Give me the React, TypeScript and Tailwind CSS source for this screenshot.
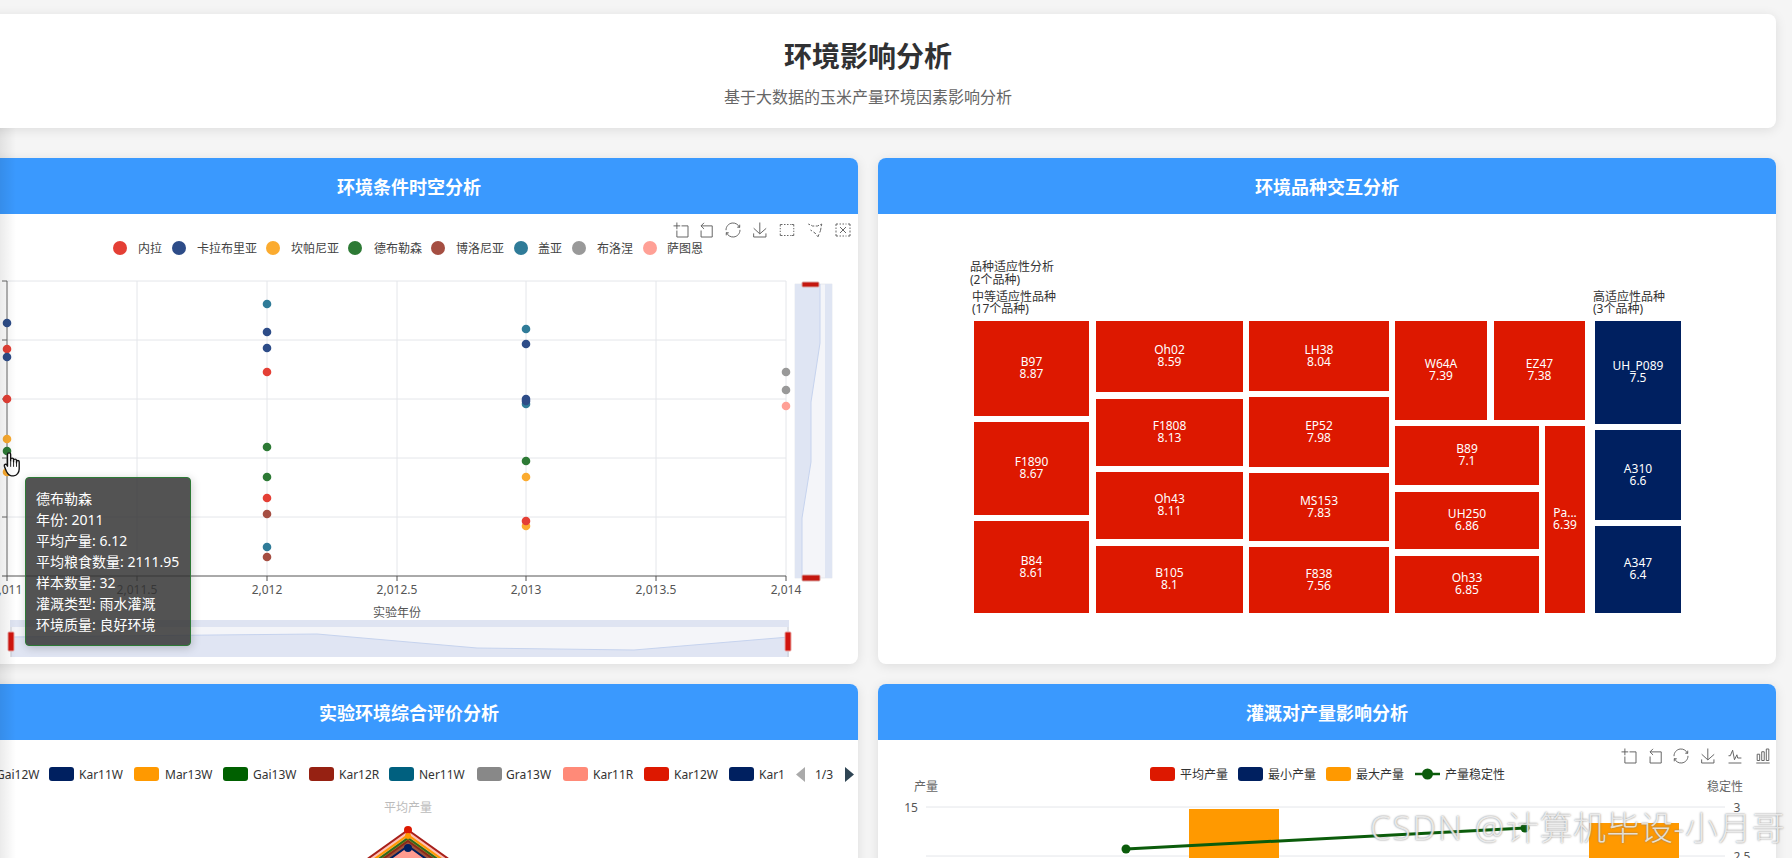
import React from "react";

const FONT = "font-['Noto_Sans','Noto_Sans_CJK_SC',sans-serif]";
const RED = "#dd1800";
const NAVY = "#002060";
const ORANGE = "#ff9900";
const GREEN = "#0b5c0b";

const C = { red: "#e43f35", navy: "#2d4c88", orange: "#fbab2f", green: "#2d7a35", brown: "#a54e42", teal: "#2f7b98", gray: "#999999", pink: "#ffa096" };

const ICONS: Record<string, React.ReactNode> = {
  zoom: <path d="M0,13.5h26.9 M13.5,26.9V0 M32.1,13.5H58V58H13.5V32.1" />,
  back: <path d="M22,1.4L9.9,13.5l12.3,12.3 M10.3,13.5H54.9v44.6H10.3v-26" />,
  restore: <path d="M47,18.9h9.8V8.7 M56.3,20.1C52.1,9,40.5,0.6,26.8,2.1C12.6,3.7,1.6,16.2,2.1,30.6 M13,41.1H3.1v10.2 M3.7,39.9c4.2,11.1,15.8,19.5,29.5,18c14.2-1.6,25.2-14.1,24.7-28.5" />,
  save: <path d="M4.7,22.9L29.3,45.5L54.7,23.4M4.6,43.6L4.6,58L53.8,58L53.8,43.6M29.2,45.1L29.2,0" />,
  rect: <path d="M3,16V8H12M48,8H57V16M57,44V52H48M12,52H3V44M18,8H24M30,8H36M42,8H45M18,52H24M30,52H36M42,52H45M3,22V27M3,33V38M57,22V27M57,33V38" />,
  poly: <path d="M3,6L10,9M15,11L20,14H27M33,14H40L46,11M51,9L57,6L55,15M54,21L52,32L49,40M46,47L42,57L37,51M33,46L30,42L24,38M18,34L12,30" />,
  clear: (
    <>
      <path d="M2,14V6H10M50,6H58V14M58,46V54H50M10,54H2V46M16,6H22M28,6H34M40,6H44M16,54H22M28,54H34M40,54H44M2,20V26M2,32V40M58,20V26M58,32V40" />
      <path d="M18,18L42,42M42,18L18,42" />
    </>
  ),
  line: <path d="M4.1,28.9h7.1l9.3-22l7.4,38l9.7-19.7l3,12.8h14.9M4.1,58h51.4" />,
  bar: <path d="M6.7,22.9h10V48h-10V22.9zM24.9,13h10v35h-10V13zM43.2,2h10v46h-10V2zM3.1,58h53.7" />,
};

function Tool({ name, x, y }: { name: string; x: number; y: number }) {
  return (
    <svg x={x} y={y} width={16} height={16} viewBox="-2 -2 64 64" fill="none" stroke="#5f5f5f" strokeWidth={3.8}>
      {ICONS[name]}
    </svg>
  );
}

function Label({ x, y, children, anchor = "start", fill = "#444", size = 12 }: { x: number; y: number; children: React.ReactNode; anchor?: "start" | "middle" | "end"; fill?: string; size?: number }) {
  return (
    <text x={x} y={y} textAnchor={anchor} dominantBaseline="central" fill={fill} fontSize={size}>
      {children}
    </text>
  );
}

function Panel({ title, viewBox, children }: { title: string; viewBox: string; children: React.ReactNode }) {
  return (
    <section className="flex h-[506px] flex-col overflow-hidden rounded-lg bg-white shadow-[0_2px_12px_rgba(0,0,0,0.1)]">
      <h2 className="flex h-[56px] shrink-0 items-center justify-center bg-[#3a99fe] pt-[2px] text-[18px] font-bold text-white">{title}</h2>
      <div className="relative h-[450px] shrink-0">
        <svg viewBox={viewBox} width={898} height={450} className="block">
          {CHARTS[title]}
        </svg>
        {children}
      </div>
    </section>
  );
}

const scatter: [number, number, string][] = [
  [7, 323, C.navy], [7, 349, C.red], [7, 357, C.navy], [7, 399, C.red], [7, 439, C.orange], [7, 472, C.orange], [7, 451, C.green],
  [267, 304, C.teal], [267, 332, C.navy], [267, 348, C.navy], [267, 372, C.red], [267, 447, C.green], [267, 477, C.green], [267, 498, C.red], [267, 514, C.brown], [267, 547, C.teal], [267, 557, C.brown],
  [526, 329, C.teal], [526, 344, C.navy], [526, 404, C.teal], [526, 401, C.navy], [526, 399, C.navy], [526, 461, C.green], [526, 477, C.orange], [526, 526, C.orange], [526, 521, C.red],
  [786, 372, C.gray], [786, 390, C.gray], [786, 406, C.pink],
];

const legend1: [number, number, string, string][] = [
  [120, 138, C.red, "内拉"], [179, 197, C.navy, "卡拉布里亚"], [273, 291, C.orange, "坎帕尼亚"], [355, 374, C.green, "德布勒森"], [438, 456, C.brown, "博洛尼亚"], [521, 538, C.teal, "盖亚"], [579, 597, C.gray, "布洛涅"], [650, 667, C.pink, "萨图恩"],
];

function Scatter() {
  return (
    <>
      {["zoom", "back", "restore", "save", "rect", "poly", "clear"].map((n, i) => (
        <Tool key={n} name={n} x={[673, 698, 725, 752, 779, 807, 835][i]} y={222} />
      ))}
      {legend1.map(([cx, tx, col, t]) => (
        <g key={t}>
          <circle cx={cx} cy={248} r={7} fill={col} />
          <Label x={tx} y={248}>{t}</Label>
        </g>
      ))}
      {[281, 340, 399, 458, 517].map((y) => (
        <line key={y} x1={7} x2={786} y1={y} y2={y} stroke="#e4e6ea" />
      ))}
      {[137, 267, 397, 526, 656, 786].map((x) => (
        <line key={x} x1={x} x2={x} y1={281} y2={576} stroke="#e4e6ea" />
      ))}
      <path d="M7,281V576" stroke="#666" />
      <path d="M2,281H7M2,340H7M2,399H7M2,458H7M2,517H7" stroke="#666" />
      <path d="M2,576H786M7,576v5M137,576v5M267,576v5M397,576v5M526,576v5M656,576v5M786,576v5" stroke="#555" fill="none" />
      {scatter.map(([x, y, col], i) => (
        <circle key={i} cx={x} cy={y} r={4.3} fill={col} />
      ))}
      {[[7, "2,011"], [137, "2,011.5"], [267, "2,012"], [397, "2,012.5"], [526, "2,013"], [656, "2,013.5"], [786, "2,014"]].map(([x, t]) => (
        <Label key={t as string} x={x as number} y={589} anchor="middle" fill="#555">{t}</Label>
      ))}
      <Label x={397} y={612} anchor="middle" fill="#555">实验年份</Label>

      <rect x={795} y={284} width={37} height={294} fill="#f4f5f9" stroke="#d8dbe3" strokeWidth={0.5} />
      <path d="M795,284H820V343L811,402V462L802,518V578H795Z" fill="#dfe5f3" stroke="none" />
      <path d="M820,284V343L811,402V462L802,518V578" fill="none" stroke="#c6d3ee" />
      <rect x={825} y={284} width={7} height={294} fill="#dfe5f3" />
      <rect x={802} y={282} width={17} height={5} rx={1} fill="#c4170f" stroke="#d9a7a5" />
      <rect x={802} y={575} width={18} height={6} rx={1} fill="#c4170f" stroke="#d9a7a5" />

      <rect x={10} y={620} width={779} height={37} fill="#f4f5f9" />
      <rect x={10} y={620} width={779} height={7} fill="#dfe4f2" />
      <path d="M11,637L317,634L477,648L634,650L789,637V657H11Z" fill="#e0e5f3" />
      <path d="M11,637L317,634L477,648L634,650L789,637" fill="none" stroke="#c6d3ee" />
      <path d="M11,627V657M788,627V657" stroke="#c9ccd4" />
      <rect x={8} y={632} width={6} height={19} rx={1} fill="#d1150f" stroke="#e8a5a2" />
      <rect x={785} y={632} width={6} height={19} rx={1} fill="#d1150f" stroke="#e8a5a2" />
    </>
  );
}

const tree: [number, number, number, number, string, string, string][] = [
  [974, 321, 1089, 416, "B97", "8.87", RED], [974, 422, 1089, 515, "F1890", "8.67", RED], [974, 521, 1089, 613, "B84", "8.61", RED],
  [1096, 321, 1243, 392, "Oh02", "8.59", RED], [1096, 399, 1243, 466, "F1808", "8.13", RED], [1096, 472, 1243, 539, "Oh43", "8.11", RED], [1096, 546, 1243, 613, "B105", "8.1", RED],
  [1249, 321, 1389, 391, "LH38", "8.04", RED], [1249, 397, 1389, 467, "EP52", "7.98", RED], [1249, 473, 1389, 541, "MS153", "7.83", RED], [1249, 547, 1389, 613, "F838", "7.56", RED],
  [1395, 321, 1487, 420, "W64A", "7.39", RED], [1494, 321, 1585, 420, "EZ47", "7.38", RED],
  [1395, 426, 1539, 485, "B89", "7.1", RED], [1395, 492, 1539, 549, "UH250", "6.86", RED], [1395, 556, 1539, 613, "Oh33", "6.85", RED], [1545, 426, 1585, 613, "Pa...", "6.39", RED],
  [1595, 321, 1681, 424, "UH_P089", "7.5", NAVY], [1595, 430, 1681, 520, "A310", "6.6", NAVY], [1595, 526, 1681, 613, "A347", "6.4", NAVY],
];

function Treemap() {
  return (
    <>
      <Label x={970} y={266} fill="#333">品种适应性分析</Label>
      <Label x={970} y={279} fill="#333">(2个品种)</Label>
      <Label x={972} y={296} fill="#333">中等适应性品种</Label>
      <Label x={972} y={308} fill="#333">(17个品种)</Label>
      <Label x={1593} y={296} fill="#333">高适应性品种</Label>
      <Label x={1593} y={308} fill="#333">(3个品种)</Label>
      {tree.map(([x1, y1, x2, y2, a, b, col]) => (
        <g key={a}>
          <rect x={x1} y={y1} width={x2 - x1} height={y2 - y1} fill={col} />
          <Label x={(x1 + x2) / 2} y={(y1 + y2) / 2 - 7} anchor="middle" fill="#fff">{a}</Label>
          <Label x={(x1 + x2) / 2} y={(y1 + y2) / 2 + 5} anchor="middle" fill="#fff">{b}</Label>
        </g>
      ))}
    </>
  );
}

const legend3: [number, number, string, string][] = [
  [-35, -4, "#c23531", "Gai12W"], [49, 79, NAVY, "Kar11W"], [134, 165, ORANGE, "Mar13W"], [223, 253, "#006000", "Gai13W"], [309, 339, "#962112", "Kar12R"], [389, 419, "#00607f", "Ner11W"], [477, 506, "#888888", "Gra13W"], [563, 593, "#ff8a78", "Kar11R"], [644, 674, RED, "Kar12W"], [729, 759, NAVY, "Kar1"],
];

function roof(a: number, w = 1.4) {
  const d = 900 - a;
  return `408,${a} ${408 + d * w},900 ${408 - d * w},900`;
}

function Radar() {
  return (
    <>
      {legend3.map(([x, tx, col, t]) => (
        <g key={t}>
          <rect x={x} y={767} width={25} height={14} rx={3} fill={col} />
          <Label x={tx} y={774} fill="#333">{t}</Label>
        </g>
      ))}
      <path d="M805,767V782L796,774.5Z" fill="#aaaaaa" />
      <Label x={815} y={774} fill="#333">1/3</Label>
      <path d="M845,767V782L854,774.5Z" fill="#2f4554" />
      <Label x={408} y={807} anchor="middle" fill="#bbbbbb">平均产量</Label>
      <polygon points={roof(830)} fill="#ffc0b5" stroke="#a8201a" strokeWidth={2} />
      <polygon points={roof(835)} fill="#f8b66a" stroke={ORANGE} strokeWidth={2} />
      <polygon points={roof(838)} fill="#9a8a30" stroke="#2f6a1c" strokeWidth={2} />
      <polygon points={roof(841)} fill="#a0523a" stroke="#8a2a18" strokeWidth={2} />
      <polygon points={roof(846)} fill="#ff9c90" stroke={NAVY} strokeWidth={2} />
      <polygon points={roof(853)} fill="#ff9c90" stroke="none" />
      <circle cx={408} cy={830} r={4} fill={RED} />
      <circle cx={408} cy={836} r={3} fill={ORANGE} />
      <circle cx={408} cy={848} r={4} fill={NAVY} />
    </>
  );
}

function Combo() {
  return (
    <>
      {["zoom", "back", "restore", "save", "line", "bar"].map((n, i) => (
        <Tool key={n} name={n} x={[1621, 1647, 1673, 1700, 1727, 1755][i]} y={748} />
      ))}
      {[[1150, 1180, RED, "平均产量"], [1238, 1268, NAVY, "最小产量"], [1326, 1356, ORANGE, "最大产量"]].map(([x, tx, col, t]) => (
        <g key={t as string}>
          <rect x={x as number} y={767} width={25} height={14} rx={3} fill={col as string} />
          <Label x={tx as number} y={774} fill="#333">{t}</Label>
        </g>
      ))}
      <path d="M1415,774H1440" stroke={GREEN} strokeWidth={2.5} />
      <circle cx={1427.5} cy={774} r={5.5} fill={GREEN} />
      <Label x={1445} y={774} fill="#333">产量稳定性</Label>
      <Label x={926} y={786} anchor="middle" fill="#666">产量</Label>
      <Label x={1725} y={786} anchor="middle" fill="#666">稳定性</Label>
      <line x1={926} x2={1725} y1={807} y2={807} stroke="#e4e6ea" />
      <line x1={926} x2={1725} y1={856} y2={856} stroke="#e4e6ea" />
      <Label x={911} y={807} anchor="middle" fill="#555">15</Label>
      <Label x={1737} y={807} anchor="middle" fill="#555">3</Label>
      <Label x={1742} y={856} anchor="middle" fill="#555">2.5</Label>
      <rect x={1189} y={809} width={90} height={60} fill={ORANGE} />
      <rect x={1589} y={823} width={90} height={60} fill={ORANGE} />
      <line x1={1126} y1={849} x2={1525} y2={828} stroke={GREEN} strokeWidth={3} />
      <circle cx={1126} cy={849} r={4.5} fill={GREEN} />
      <circle cx={1525} cy={828} r={4.5} fill={GREEN} />
    </>
  );
}

const CHARTS: Record<string, React.ReactNode> = {
  环境条件时空分析: <Scatter />,
  环境品种交互分析: <Treemap />,
  实验环境综合评价分析: <Radar />,
  灌溉对产量影响分析: <Combo />,
};

const TIP = ["德布勒森", "年份: 2011", "平均产量: 6.12", "平均粮食数量: 2111.95", "样本数量: 32", "灌溉类型: 雨水灌溉", "环境质量: 良好环境"];

export default function App() {
  return (
    <div className={`relative h-[858px] w-[1792px] overflow-hidden bg-[#f5f5f5] ${FONT}`}>
      <div className="-ml-[40px] flex w-[1816px] flex-col gap-[30px] pt-[14px]">
        <header className="flex h-[114px] flex-col items-center rounded-lg bg-white pt-[22px] shadow-[0_2px_12px_rgba(0,0,0,0.1)]">
          <h1 className="text-[28px] leading-[40px] font-bold text-[#303133]">环境影响分析</h1>
          <p className="mt-[10px] text-[16px] leading-[22px] text-[#666]">基于大数据的玉米产量环境因素影响分析</p>
        </header>
        <div className="grid grid-cols-[898px_898px] gap-5">
          <Panel title="环境条件时空分析" viewBox="-40 214 898 450">
            <div className="absolute top-[263px] left-[65px] w-[166px] rounded border border-[#2d7a35] bg-[rgba(50,50,50,0.84)] p-[10px] text-[14px] leading-[21px] whitespace-nowrap text-white shadow-[1px_2px_10px_rgba(0,0,0,0.2)]">
              {TIP.map((t) => (
                <div key={t}>{t}</div>
              ))}
            </div>
            <svg className="absolute top-[237px] left-[43px]" width={18} height={26} viewBox="0 0 16 23">
              <path d="M4,10V3a1.4,1.4,0,0,1,2.8,0V9V7.6a1.3,1.3,0,0,1,2.6,0V9.5V8.4a1.3,1.3,0,0,1,2.6,0V10.5V9.6a1.2,1.2,0,0,1,2.4,0V16c0,3-2,6-5,6H7.5C5,22,4,20,3,18L1.2,13.5C.7,12,2.6,11,3.4,12.4L4,13.5Z" fill="#fff" stroke="#111" strokeWidth={1.2} strokeLinejoin="round" />
              <path d="M6.8,9.5V14M9.4,9.5V14M12,10.5V14" stroke="#111" strokeWidth={0.8} />
            </svg>
          </Panel>
          <Panel title="环境品种交互分析" viewBox="878 214 898 450">
            {null}
          </Panel>
          <Panel title="实验环境综合评价分析" viewBox="-40 740 898 450">
            {null}
          </Panel>
          <Panel title="灌溉对产量影响分析" viewBox="878 740 898 450">
            {null}
          </Panel>
        </div>
      </div>
      <div className="pointer-events-none absolute top-[128px] bottom-0 left-0 w-[16px] bg-gradient-to-r from-black/[0.08] to-transparent" />
      <div className="pointer-events-none absolute top-[806px] left-[1370px] text-[33px] leading-[44px] font-light whitespace-nowrap text-white/75 [text-shadow:0_0_2px_#777]">
        <span className="tracking-[2px]">CSDN @</span>
        <span className="tracking-[0.5px]">计算机毕设-小月哥</span>
      </div>
    </div>
  );
}
